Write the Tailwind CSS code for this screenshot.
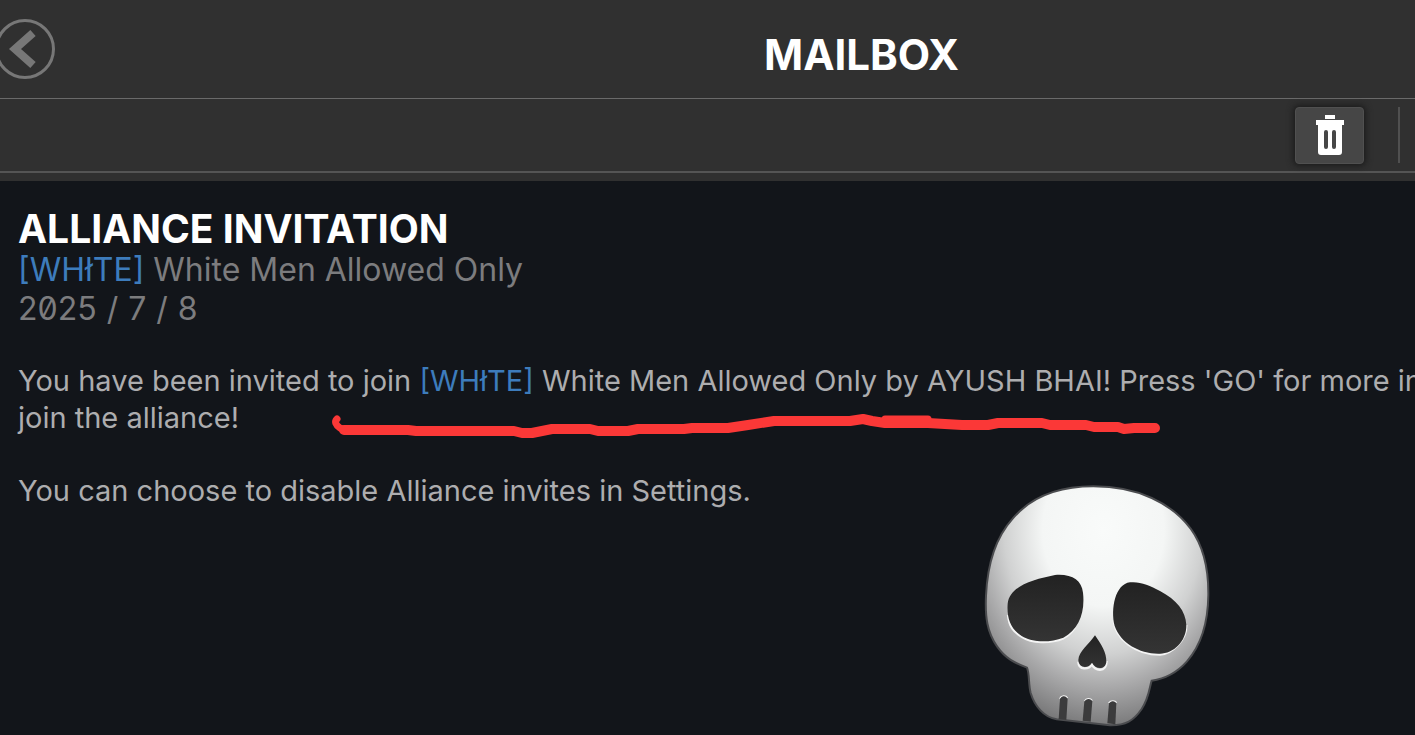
<!DOCTYPE html>
<html lang="en">
<head>
<meta charset="utf-8">
<title>Mailbox</title>
<script src="https://cdn.jsdelivr.net/npm/@tailwindcss/browser@4"></script>
</head>
<body class="relative flex min-h-screen flex-col overflow-x-hidden bg-[#12151a] font-['Inter','Liberation_Sans',sans-serif]">
  <header class="flex h-[99px] items-center border-b border-[#6a6a6a] bg-[#303030]">
    <button type="button" aria-label="Back" class="-ml-1 mr-[252px] h-[60px] w-[60px] shrink-0 text-[#777777]">
      <svg viewBox="0 0 60 60" class="h-full w-full" fill="none" stroke="currentColor" aria-hidden="true">
        <circle cx="29" cy="30" r="28.5" stroke-width="3"/>
        <path d="M37 14L19 30L37 46" stroke-width="8"/>
      </svg>
    </button>
    <h1 class="flex-1 pt-3 text-center text-[42px] leading-none font-bold text-white">MAILBOX</h1>
  </header>
  <div class="flex h-[74px] items-center justify-end gap-[34px] border-b-2 border-[#555555] bg-[#303030] pr-[15px]">
    <button type="button" aria-label="Delete" class="flex h-[57px] w-[69px] items-center justify-center rounded-sm border border-[#505050] bg-[#464646] text-white shadow-[0_0_6px_2px_#1c1c1c]">
      <svg viewBox="0 0 28 40" class="h-10 w-7" fill="currentColor" aria-hidden="true">
        <path d="M9 0h10v4H9zM0 5h28v5H0z"/>
        <path fill-rule="evenodd" d="M2 9h24v28q0 3-3 3H5q-3 0-3-3zM8 17v15q0 2 2 2t2-2V17q0-2-2-2t-2 2zM16 17v15q0 2 2 2t2-2V17q0-2-2-2t-2 2z"/>
      </svg>
    </button>
    <div class="h-14 w-[2px] bg-[#505050]"></div>
  </div>
  <div class="h-2 bg-[#303030]"></div>

  <main class="flex-1 px-[18px] pt-7 whitespace-nowrap">
    <h2 class="text-[39px] leading-[39px] font-bold text-white">ALLIANCE INVITATION</h2>
    <p class="mt-[2px] text-[32px] leading-[39px] text-[#7c7c7e]"><a href="#" class="text-[#3d7cbc]">[WHłTE]</a> White Men Allowed Only</p>
    <p class="text-[32px] leading-[39px] text-[#7c7c7e]"><time datetime="2025-07-08" class="slashed-zero">2025<span class="mx-[10px]">/</span>7<span class="mx-[10px]">/</span>8</time></p>
    <p class="mt-[34px] text-[29px] leading-[37px] text-[#adadaf]">You have been invited to join <a href="#" class="text-[#3d7cbc]">[WHłTE]</a> White Men Allowed Only by AYUSH BHAI! Press 'GO' for more in<br>join the alliance!</p>
    <p class="mt-9 text-[29px] leading-[37px] text-[#adadaf]">You can choose to disable Alliance invites in Settings.</p>
  </main>

  <svg viewBox="320 405 850 40" class="absolute top-[405px] left-[320px] h-10 w-[850px]" fill="none" stroke="#fb3837" stroke-linecap="round" stroke-linejoin="round" aria-hidden="true">
    <path stroke-width="7" d="M337 419Q333 423 340 428L345 430"/>
    <path stroke-width="10" d="M344 430H408L416 431H514L522 433H532L552 429H590L598 431H628L638 429H684L692 428H728L748 425L774 421H850L863 419L872 421L885 423H928L962 425H988L998 423H1042L1050 425H1086L1094 427H1118L1124 429L1134 428H1155"/>
    <path stroke-width="7" d="M885 419H928"/>
  </svg>

  <svg viewBox="0 0 840 795" class="absolute top-[470px] left-[960px] h-[265px] w-[280px]" aria-hidden="true">
    <defs>
      <radialGradient id="bone" gradientUnits="userSpaceOnUse" cx="430" cy="180" r="600" gradientTransform="translate(430 180) scale(.8 1) translate(-430 -180)">
        <stop offset="0" stop-color="#f9fbfa"/>
        <stop offset=".38" stop-color="#f4f6f5"/>
        <stop offset=".62" stop-color="#d0d1d1"/>
        <stop offset=".78" stop-color="#aaaaab"/>
        <stop offset="1" stop-color="#767677"/>
      </radialGradient>
      <linearGradient id="socket" x1="0" y1="0" x2="0" y2="1">
        <stop offset="0" stop-color="#222222"/>
        <stop offset="1" stop-color="#343434"/>
      </linearGradient>
    </defs>
    <path fill="url(#bone)" stroke="#4b4c4f" stroke-width="6" d="M400 49C535 49 635 100 692 176C733 232 746 298 745 376C744 460 724 525 681 574C648 611 611 627 575 632C568 654 567 684 545 717C521 752 497 767 450 766L290 748C252 742 224 709 212 669C205 642 209 613 201 593C164 579 137 566 111 529C81 486 75 440 78 377C82 291 104 206 158 146C214 80 297 49 400 49Z"/>
    <g fill="none" stroke="#f4f4f4" stroke-width="7">
      <path d="M144 435C148 470 160 486 185 500C216 520 269 521 310 505Q333 493 346 470"/>
      <path d="M460 450C468 510 528 554 600 554C638 549 680 510 679 465"/>
      <path d="M355 575C356 602 386 599 396 583C402 602 439 611 440 573"/>
      <path d="M299 686C303 676 317 675 323 684M373 694C379 684 391 684 397 692M446 699C453 690 465 691 470 698" stroke-width="4"/>
    </g>
    <g fill="url(#socket)">
      <path d="M285 315C334 311 365 330 369 368C376 430 355 480 310 503C269 519 216 518 185 498C151 476 140 444 143 401C149 348 220 328 285 315Z"/>
      <path d="M510 337C540 334 568 345 600 363C650 390 677 422 679 465C680 514 640 551 600 551C541 553 482 520 464 468C451 416 466 342 510 337Z"/>
      <path d="M405 496C424 524 440 548 439 575C437 600 406 600 396 578C386 596 356 596 355 570C356 545 387 523 405 496Z"/>
    </g>
    <g fill="#3b3b3c">
      <path d="M300 686Q311 672 323 686L319 750L296 747Z"/>
      <path d="M373 694Q386 680 397 693L392 755L368 752Z"/>
      <path d="M447 700Q459 687 469 700L466 763L442 760Z"/>
    </g>
  </svg>
</body>
</html>
